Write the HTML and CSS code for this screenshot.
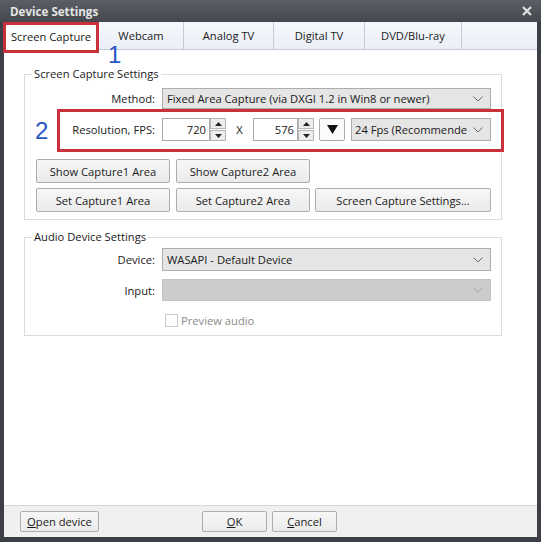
FILE: index.html
```html
<!DOCTYPE html>
<html>
<head>
<meta charset="utf-8">
<link rel="stylesheet" href="styles.css">
</head>
<body>
<div class="window">
  <div class="titlebar">
    <span class="title">Device Settings</span>
    <svg class="close" width="10" height="10" viewBox="0 0 10 10"><path d="M1 1 L9 9 M9 1 L1 9" stroke="#e2e2e2" stroke-width="2.2"/></svg>
  </div>
  <div class="client">
    <div class="tabs">
      <div class="tab active t1">Screen Capture</div>
      <div class="tab t2">Webcam</div>
      <div class="tab t3">Analog TV</div>
      <div class="tab t4">Digital TV</div>
      <div class="tab t5">DVD/Blu-ray</div>
      <div class="tab-fill"></div>
    </div>
    <div class="page">
      <fieldset class="group g1">
        <legend>Screen Capture Settings</legend>
        <div class="row method">
          <span class="lbl">Method:</span>
          <div class="combo wide">
            <span class="ctext">Fixed Area Capture (via DXGI 1.2 in Win8 or newer)</span>
            <svg class="chev" width="10" height="6" viewBox="0 0 10 6"><path d="M0.5 0.5 L5 5 L9.5 0.5" fill="none" stroke="#6a6a6a" stroke-width="1"/></svg>
          </div>
        </div>
        <div class="row res">
          <span class="lbl">Resolution, FPS:</span>
          <div class="num-in n1">720</div>
          <div class="spin">
            <div class="sb"><svg width="7" height="4" viewBox="0 0 7 4"><path d="M0 4 L3.5 0 L7 4Z" fill="#222"/></svg></div>
            <div class="sb"><svg width="7" height="4" viewBox="0 0 7 4"><path d="M0 0 L3.5 4 L7 0Z" fill="#222"/></svg></div>
          </div>
          <span class="x">X</span>
          <div class="num-in n2">576</div>
          <div class="spin">
            <div class="sb"><svg width="7" height="4" viewBox="0 0 7 4"><path d="M0 4 L3.5 0 L7 4Z" fill="#222"/></svg></div>
            <div class="sb"><svg width="7" height="4" viewBox="0 0 7 4"><path d="M0 0 L3.5 4 L7 0Z" fill="#222"/></svg></div>
          </div>
          <div class="dropbtn"><svg width="11" height="9" viewBox="0 0 11 9"><path d="M0 0 L11 0 L5.5 9Z" fill="#111"/></svg></div>
          <div class="combo fps">
            <span class="ctext">24 Fps (Recommende</span>
            <svg class="chev" width="10" height="6" viewBox="0 0 10 6"><path d="M0.5 0.5 L5 5 L9.5 0.5" fill="none" stroke="#6a6a6a" stroke-width="1"/></svg>
          </div>
        </div>
        <div class="btnrow r1">
          <div class="btn b1">Show Capture1 Area</div>
          <div class="btn b2">Show Capture2 Area</div>
        </div>
        <div class="btnrow r2">
          <div class="btn b1">Set Capture1 Area</div>
          <div class="btn b2">Set Capture2 Area</div>
          <div class="btn b3">Screen Capture Settings...</div>
        </div>
      </fieldset>
      <fieldset class="group g2">
        <legend>Audio Device Settings</legend>
        <div class="row device">
          <span class="lbl">Device:</span>
          <div class="combo wide">
            <span class="ctext">WASAPI - Default Device</span>
            <svg class="chev" width="10" height="6" viewBox="0 0 10 6"><path d="M0.5 0.5 L5 5 L9.5 0.5" fill="none" stroke="#6a6a6a" stroke-width="1"/></svg>
          </div>
        </div>
        <div class="row input">
          <span class="lbl">Input:</span>
          <div class="combo wide disabled">
            <span class="ctext"></span>
            <svg class="chev" width="10" height="6" viewBox="0 0 10 6"><path d="M0.5 0.5 L5 5 L9.5 0.5" fill="none" stroke="#a9a9a9" stroke-width="1"/></svg>
          </div>
        </div>
        <div class="row check">
          <span class="lbl"></span>
          <span class="box"></span>
          <span class="ctext dis">Preview audio</span>
        </div>
      </fieldset>
    </div>
    <div class="footer">
      <div class="btn fb open"><u>O</u>pen device</div>
      <div class="btn fb ok"><u>O</u>K</div>
      <div class="btn fb cancel"><u>C</u>ancel</div>
    </div>
  </div>
  <div class="mark mark1"></div>
  <div class="mark mark2"></div>
  <div class="anno anno1">1</div>
  <div class="anno anno2">2</div>
</div>
</body>
</html>
```

FILE: styles.css
```css
html, body {
  margin: 0;
  padding: 0;
  background: #ffffff;
}
body {
  font-family: "Open Sans", "Noto Sans", sans-serif;
  font-size: 11.2px;
  color: #1a1a1a;
}
.window {
  position: relative;
  width: 541px;
  height: 542px;
  background: #3c3f46;
  display: flex;
  flex-direction: column;
  box-sizing: border-box;
}
.titlebar {
  height: 22px;
  flex: none;
  display: flex;
  align-items: center;
  padding: 0 9px 0 10px;
  background: linear-gradient(#5b5e65, #44474e);
}
.title {
  color: #e4e4e4;
  font-weight: 700;
  font-size: 11.6px;
}
.close {
  margin-left: auto;
}
.client {
  flex: 1;
  margin: 0 4px 5px 4px;
  display: flex;
  flex-direction: column;
  background: #ffffff;
}
.tabs {
  height: 28px;
  flex: none;
  display: flex;
  background: linear-gradient(#f6f8fc, #eaeef6);
  border-bottom: 1px solid #c5cbd7;
  box-sizing: border-box;
}
.tab {
  height: 27px;
  box-sizing: border-box;
  border-right: 1px solid #c5cbd7;
  display: flex;
  align-items: center;
  justify-content: center;
  color: #1a1a1a;
  white-space: nowrap;
}
.tab.active {
  background: #ffffff;
  height: 28px;
}
.t1 { width: 95px; }
.t2 { width: 85px; }
.t3 { width: 90px; }
.t4 { width: 91px; }
.t5 { width: 97px; }
.tab-fill { flex: 1; }

.page {
  flex: 1;
  padding: 0 35px 0 20px;
  display: flex;
  flex-direction: column;
}
.group {
  margin: 0;
  padding: 0;
  border: 1px solid #dcdcdc;
  min-width: 0;
}
.group legend {
  margin-left: 7px;
  padding: 0 2px;
  line-height: 16px;
  color: #1a1a1a;
}
.g1 {
  margin-top: 16px;
  padding-bottom: 7px;
}
.g2 {
  margin-top: 9px;
  padding-bottom: 8px;
}
.row {
  display: flex;
  align-items: center;
  padding-right: 10px;
}
.lbl {
  width: 130px;
  flex: none;
  text-align: right;
  margin-right: 7px;
  white-space: nowrap;
}
.combo {
  box-sizing: border-box;
  border: 1px solid #adadad;
  background: #e5e5e5;
  display: flex;
  align-items: center;
  padding: 0 7px 0 4px;
  min-width: 0;
}
.ctext {
  white-space: nowrap;
  overflow: hidden;
}
.combo.wide { flex: 1; }
.combo .chev { margin-left: auto; flex: none; }
.combo.disabled {
  background: #cccccc;
  border-color: #c2c2c2;
}
.method { margin-top: 6px; }
.method .combo { height: 21px; }

.res { margin-top: 9px; }
.num-in {
  box-sizing: border-box;
  height: 23px;
  border: 1px solid #a9a9a9;
  background: #fff;
  display: flex;
  align-items: center;
  justify-content: flex-end;
  padding-right: 3px;
}
.n1 { width: 48px; }
.n2 { width: 45px; }
.spin {
  width: 16px;
  height: 23px;
  display: flex;
  flex-direction: column;
  gap: 1px;
  flex: none;
}
.sb {
  flex: 1;
  box-sizing: border-box;
  border: 1px solid #b5b5b5;
  background: #ececec;
  display: flex;
  align-items: center;
  justify-content: center;
}
.x {
  width: 27px;
  text-align: center;
}
.dropbtn {
  box-sizing: border-box;
  width: 26px;
  height: 23px;
  margin-left: 5px;
  border: 1px solid #adadad;
  border-radius: 2px;
  background: #fbfbfb;
  display: flex;
  align-items: center;
  justify-content: center;
  flex: none;
}
.combo.fps {
  margin-left: 6px;
  flex: 1;
  height: 23px;
  padding-left: 3px;
}
.combo.fps .ctext { margin-right: 6px; }

.btnrow {
  display: flex;
  padding-left: 11px;
  gap: 6px;
}
.r1 { margin-top: 18px; }
.r2 { margin-top: 5px; }
.btn {
  box-sizing: border-box;
  height: 24px;
  border: 1px solid #adadad;
  border-radius: 2px;
  background: linear-gradient(#f7f7f7, #ebebeb);
  display: flex;
  align-items: center;
  justify-content: center;
  color: #1a1a1a;
  white-space: nowrap;
}
.btnrow .b1 { width: 134px; }
.btnrow .b2 { width: 134px; }
.btnrow .b3 { width: 176px; margin-left: -1px; }

.device { margin-top: 3px; }
.device .combo { height: 23px; }
.input { margin-top: 8px; }
.input .combo { height: 22px; }
.check { margin-top: 13px; height: 13px; }
.check .box {
  width: 13px;
  height: 13px;
  box-sizing: border-box;
  border: 1px solid #c9c9c9;
  background: #fff;
  margin-left: 3px;
  flex: none;
}
.dis { color: #8a8a8a; margin-left: 3px; }

.footer {
  height: 32px;
  flex: none;
  box-sizing: border-box;
  border-top: 1px solid #d6d6d6;
  background: #f0f0f0;
  display: flex;
  align-items: flex-start;
  padding: 5px 0 0 16px;
}
.fb { height: 21px; }
.open { width: 79px; }
.ok { width: 65px; margin-left: 103px; }
.cancel { width: 65px; margin-left: 5px; }

.mark {
  position: absolute;
  box-sizing: border-box;
  border: 3px solid #c8313b;
}
.mark1 { left: 3px; top: 22px; width: 96px; height: 31px; }
.mark2 { left: 57px; top: 109px; width: 447px; height: 43px; }
.anno {
  position: absolute;
  color: #2a55c4;
  font-family: "Liberation Sans", sans-serif;
  font-size: 24px;
  line-height: 18px;
}
.anno1 { left: 108px; top: 46px; }
.anno2 { left: 35px; top: 122px; }
```
